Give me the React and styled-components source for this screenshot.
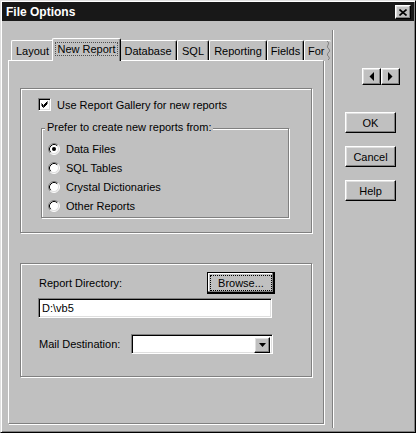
import styled, { createGlobalStyle, css } from "styled-components";

const GlobalStyle = createGlobalStyle`
  html, body { margin: 0; padding: 0; background: #c0c0c0; }
  body { font-family: "Liberation Sans", Arial, sans-serif; font-size: 11px; color: #000; }
  * { box-sizing: border-box; }
`;

const raised = css`
  background: #c0c0c0;
  border: 1px solid;
  border-color: #fff #000 #000 #fff;
  box-shadow: inset -1px -1px 0 #808080, inset 1px 1px 0 #dfdfdf;
`;

const sunken = css`
  background: #fff;
  border: 1px solid;
  border-color: #808080 #fff #fff #808080;
  box-shadow: inset 1px 1px 0 #000, inset -1px -1px 0 #dfdfdf;
`;

const etched = css`
  border: 1px solid #808080;
  box-shadow: inset 1px 1px 0 #fff, 1px 1px 0 #fff;
`;

const Window = styled.div`
  width: 416px;
  height: 433px;
  padding: 1px;
  display: flex;
  flex-direction: column;
  background: #c0c0c0;
  border: 1px solid;
  border-color: #dfdfdf #000 #000 #dfdfdf;
  box-shadow: inset 1px 1px 0 #fff, inset -1px -1px 0 #808080;
  overflow: hidden;
`;

const TitleBar = styled.div`
  height: 19px;
  display: flex;
  align-items: center;
  justify-content: space-between;
  padding: 0 3px 0 4px;
  background: #181818;
  color: #fff;
  font-weight: bold;
  font-size: 12px;
`;

const CloseButton = styled.div`
  ${raised};
  width: 16px;
  height: 14px;
  display: flex;
  align-items: center;
  justify-content: center;
  margin-top: 1px;
`;

const Body = styled.div`
  flex: 1;
  display: flex;
`;

const LeftColumn = styled.div`
  flex: 0 0 322px;
  width: 322px;
  padding: 17px 0 0 6px;
`;

const TabRow = styled.div`
  height: 22px;
  margin-left: 3px;
  display: flex;
  align-items: flex-end;
`;

const Tab = styled.div`
  flex: 0 0 ${({ $w }) => $w}px;
  height: ${({ $active }) => ($active ? 23 : 20)}px;
  margin: ${({ $active }) => ($active ? "0 -2px -1px" : "0")};
  padding-bottom: ${({ $active }) => ($active ? 3 : 0)}px;
  position: ${({ $active }) => ($active ? "relative" : "static")};
  display: flex;
  align-items: center;
  justify-content: ${({ $torn }) => ($torn ? "flex-start" : "center")};
  padding-left: ${({ $torn }) => ($torn ? 3 : 0)}px;
  background: #c0c0c0;
  border-top: 1px solid #fff;
  border-left: 1px solid #fff;
  border-right: ${({ $torn }) => ($torn ? "none" : "1px solid #000")};
  border-radius: 2px 2px 0 0;
  box-shadow: ${({ $torn }) => ($torn ? "none" : "inset -1px 0 0 #808080")};
  white-space: nowrap;
`;

const FocusText = styled.span`
  padding: 0 1px;
  outline: 1px dotted #505050;
`;

const Panel = styled.div`
  width: 316px;
  height: 364px;
  padding: 27px 0 0 11px;
  border: 1px solid;
  border-color: #fff #808080 #808080 #fff;
  box-shadow: 1px 1px 0 #fff;
`;

const Group = styled.div`
  ${etched};
  width: ${({ $w }) => $w}px;
  height: ${({ $h }) => $h}px;
  margin-top: ${({ $mt }) => $mt || 0}px;
  margin-left: ${({ $ml }) => $ml || 0}px;
  padding: ${({ $pad }) => $pad};
  display: flex;
  flex-direction: column;
`;

const Legend = styled.div`
  align-self: flex-start;
  margin: -8px 0 0 3px;
  padding: 0 2px;
  height: 13px;
  line-height: 13px;
  background: #c0c0c0;
`;

const CheckRow = styled.div`
  display: flex;
  align-items: center;
  gap: 6px;
  height: 13px;
`;

const CheckBox = styled.div`
  ${sunken};
  width: 13px;
  height: 13px;
  display: flex;
  align-items: center;
  justify-content: center;
`;

const RadioList = styled.div`
  margin-top: 5px;
  padding-left: 6px;
  display: flex;
  flex-direction: column;
`;

const RadioRow = styled.div`
  height: 19px;
  display: flex;
  align-items: center;
  gap: 6px;
`;

const FieldRow = styled.div`
  display: flex;
  align-items: center;
  justify-content: ${({ $spread }) => ($spread ? "space-between" : "flex-start")};
  margin-top: ${({ $mt }) => $mt || 0}px;
`;

const Label = styled.span`
  width: ${({ $w }) => ($w ? `${$w}px` : "auto")};
  flex-shrink: 0;
`;

const Button = styled.div`
  ${raised};
  width: ${({ $w }) => $w}px;
  height: ${({ $h }) => $h}px;
  display: flex;
  align-items: center;
  justify-content: center;
  ${({ $default }) =>
    $default &&
    css`
      border: 1px solid #000;
      padding: 2px;
      box-shadow: inset -1px -1px 0 #000, inset -2px -2px 0 #808080,
        inset 1px 1px 0 #fff;
    `}
`;

const FocusRing = styled.span`
  flex: 1;
  align-self: stretch;
  display: flex;
  align-items: center;
  justify-content: center;
  border: 1px dotted #000;
`;

const TextField = styled.div`
  ${sunken};
  width: 234px;
  height: 20px;
  margin: 4px 0 0 -1px;
  padding-left: 3px;
  display: flex;
  align-items: center;
`;

const Combo = styled.div`
  ${sunken};
  width: 142px;
  height: 20px;
  padding: 2px;
  display: flex;
  justify-content: flex-end;
`;

const DropButton = styled.div`
  ${raised};
  width: 16px;
  height: 16px;
  display: flex;
  align-items: center;
  justify-content: center;
`;

const Separator = styled.div`
  flex: 0 0 2px;
  margin: 9px 0 3px 8px;
  border-left: 1px solid #808080;
  border-right: 1px solid #fff;
`;

const RightColumn = styled.div`
  flex: 1;
  padding: 47px 0 0 11px;
  display: flex;
  flex-direction: column;
  align-items: flex-start;
`;

const ArrowPair = styled.div`
  display: flex;
  margin-left: 17px;
  margin-bottom: 27px;
`;

const ButtonStack = styled.div`
  display: flex;
  flex-direction: column;
  gap: 13px;
`;

const Radio = ({ checked }) => (
  <svg width="12" height="12" viewBox="0 0 12 12">
    <circle cx="6" cy="6" r="5" fill="#fff" />
    <path d="M2.11 9.89A5.5 5.5 0 0 1 9.89 2.11" stroke="#808080" fill="none" />
    <path d="M9.89 2.11A5.5 5.5 0 0 1 2.11 9.89" stroke="#fff" fill="none" />
    <path d="M2.82 9.18A4.5 4.5 0 0 1 9.18 2.82" stroke="#000" fill="none" />
    <path d="M9.18 2.82A4.5 4.5 0 0 1 2.82 9.18" stroke="#dfdfdf" fill="none" />
    {checked && <circle cx="6" cy="6" r="2" fill="#000" />}
  </svg>
);

const tabs = [
  { label: "Layout", w: 43 },
  { label: "New Report", w: 69, active: true },
  { label: "Database", w: 58 },
  { label: "SQL", w: 32 },
  { label: "Reporting", w: 58 },
  { label: "Fields", w: 37 },
  { label: "For", w: 27, torn: true },
];

const sources = ["Data Files", "SQL Tables", "Crystal Dictionaries", "Other Reports"];

export default function App() {
  return (
    <>
      <GlobalStyle />
      <Window>
        <TitleBar>
          <span>File Options</span>
          <CloseButton>
            <svg width="8" height="7" viewBox="0 0 8 7">
              <path d="M0.5 0.5L7.5 6.5M7.5 0.5L0.5 6.5" stroke="#000" strokeWidth="1.6" />
            </svg>
          </CloseButton>
        </TitleBar>
        <Body>
          <LeftColumn>
            <TabRow>
              {tabs.map((t) => (
                <Tab key={t.label} $w={t.w} $active={t.active} $torn={t.torn}>
                  {t.active ? <FocusText>{t.label}</FocusText> : t.label}
                  {t.torn && (
                    <svg width="5" height="19" viewBox="0 0 5 19" style={{ marginLeft: 1 }}>
                      <path
                        d="M1 0 Q4 2 2 4 Q0 6 3 8 Q5 10 2 12 Q0 14 3 16 Q4 18 2 19"
                        stroke="#808080"
                        fill="none"
                      />
                    </svg>
                  )}
                </Tab>
              ))}
            </TabRow>
            <Panel>
              <Group $w={292} $h={145} $pad="9px 0 0 17px">
                <CheckRow>
                  <CheckBox>
                    <svg width="7" height="7" viewBox="0 0 7 7">
                      <path d="M0.5 2.5L2.5 4.5L6.5 0.5M0.5 3.5L2.5 5.5L6.5 1.5M0.5 4.5L2.5 6.5L6.5 2.5" stroke="#000" fill="none" />
                    </svg>
                  </CheckBox>
                  <span>Use Report Gallery for new reports</span>
                </CheckRow>
                <Group $w={248} $h={90} $mt={17} $ml={3} $pad="0">
                  <Legend>Prefer to create new reports from:</Legend>
                  <RadioList>
                    {sources.map((s, i) => (
                      <RadioRow key={s}>
                        <Radio checked={i === 0} />
                        <span>{s}</span>
                      </RadioRow>
                    ))}
                  </RadioList>
                </Group>
              </Group>
              <Group $w={292} $h={114} $mt={30} $pad="8px 36px 0 18px">
                <FieldRow $spread>
                  <Label>Report Directory:</Label>
                  <Button $w={68} $h={22} $default>
                    <FocusRing>Browse...</FocusRing>
                  </Button>
                </FieldRow>
                <TextField>D:\vb5</TextField>
                <FieldRow $mt={16}>
                  <Label $w={92}>Mail Destination:</Label>
                  <Combo>
                    <DropButton>
                      <svg width="7" height="4" viewBox="0 0 7 4">
                        <path d="M0 0H7L3.5 4Z" fill="#000" />
                      </svg>
                    </DropButton>
                  </Combo>
                </FieldRow>
              </Group>
            </Panel>
          </LeftColumn>
          <Separator />
          <RightColumn>
            <ArrowPair>
              <Button $w={19} $h={17}>
                <svg width="5" height="9" viewBox="0 0 5 9">
                  <path d="M5 0V9L0.5 4.5Z" fill="#000" />
                </svg>
              </Button>
              <Button $w={19} $h={17}>
                <svg width="5" height="9" viewBox="0 0 5 9">
                  <path d="M0 0V9L4.5 4.5Z" fill="#000" />
                </svg>
              </Button>
            </ArrowPair>
            <ButtonStack>
              <Button $w={51} $h={21}>OK</Button>
              <Button $w={51} $h={21}>Cancel</Button>
              <Button $w={51} $h={21}>Help</Button>
            </ButtonStack>
          </RightColumn>
        </Body>
      </Window>
    </>
  );
}
